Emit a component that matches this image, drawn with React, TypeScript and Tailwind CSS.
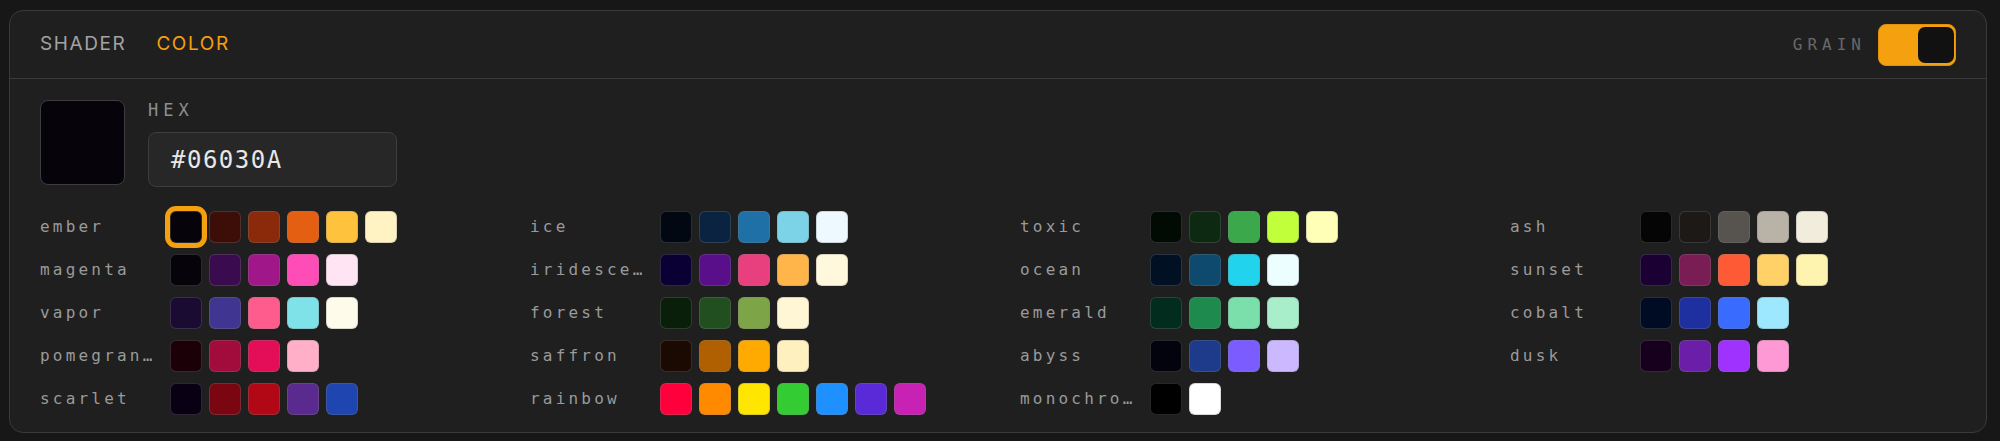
import { useState } from "react";

type Palette = {
  name: string;
  colors: string[];
};

const PALETTES: Palette[] = [
  { name: "ember", colors: ["#06030A", "#3D0E07", "#8B2A0B", "#E55F12", "#FFC23D", "#FFF3C4"] },
  { name: "magenta", colors: ["#06030A", "#3B0B4F", "#A0178A", "#FF4DB8", "#FFE5F3"] },
  { name: "vapor", colors: ["#1A0B33", "#413592", "#FF5C8E", "#7EE2E8", "#FFFBEA"] },
  { name: "pomegranate", colors: ["#1C0008", "#A20C3C", "#E40D58", "#FFB0C8"] },
  { name: "scarlet", colors: ["#0A0014", "#7A0611", "#B20714", "#5B2A8F", "#1F45B0"] },
  { name: "ice", colors: ["#020812", "#0A2340", "#2070A8", "#7CD2E6", "#EEF8FF"] },
  { name: "iridescent", colors: ["#0A0033", "#5A0F8A", "#E8407F", "#FFB54A", "#FFF8DC"] },
  { name: "forest", colors: ["#0A1F0A", "#214F20", "#7DA548", "#FFF6D5"] },
  { name: "saffron", colors: ["#1A0A02", "#B06000", "#FFAA00", "#FFF0C0"] },
  { name: "rainbow", colors: ["#FF003C", "#FF8A00", "#FFE600", "#33CC33", "#1E90FF", "#5B2AD8", "#C822B4"] },
  { name: "toxic", colors: ["#020A04", "#0D2912", "#3BA84B", "#C0FF3A", "#FFFFB8"] },
  { name: "ocean", colors: ["#021024", "#0D4A6E", "#22D3EE", "#ECFEFF"] },
  { name: "emerald", colors: ["#022C1E", "#1F8A4E", "#7ADFAA", "#A8EECB"] },
  { name: "abyss", colors: ["#03030D", "#1E3A8A", "#7B5CFF", "#CBB8FF"] },
  { name: "monochrome", colors: ["#000000", "#FFFFFF"] },
  { name: "ash", colors: ["#050505", "#1C1917", "#57534E", "#B8B2A7", "#F2ECDD"] },
  { name: "sunset", colors: ["#1A0033", "#7A1D55", "#FF5A36", "#FFD166", "#FFF3B0"] },
  { name: "cobalt", colors: ["#000B24", "#1E2FA0", "#3A6BFF", "#9DE8FF"] },
  { name: "dusk", colors: ["#16001E", "#6B1FA8", "#A032FF", "#FF99D6"] },
];

const MONO = "font-['DejaVu_Sans_Mono','Liberation_Mono',monospace]";

export default function App() {
  const [tab, setTab] = useState<"shader" | "color">("color");
  const [grain, setGrain] = useState(true);
  const [selected, setSelected] = useState({ palette: "ember", index: 0 });

  const hex = PALETTES.find((p) => p.name === selected.palette)?.colors[selected.index] ?? "#06030A";

  return (
    <div className="min-h-screen bg-[#171717] pl-[9px] pt-[10px]">
      <div className="flex h-[423px] w-[1978px] flex-col rounded-[14px] border border-[#3a3a3a] bg-[#1f1f1f]">
        <div className="flex h-[68px] items-center justify-between border-b border-[#3a3a3a] px-[30px]">
          <div className="flex items-center gap-[30px] font-['Inter',sans-serif] text-[19px] tracking-[1.6px]">
            <button
              type="button"
              onClick={() => setTab("shader")}
              className={tab === "shader" ? "text-[#f5a00f]" : "text-[#a3a3a3]"}
            >
              SHADER
            </button>
            <button
              type="button"
              onClick={() => setTab("color")}
              className={tab === "color" ? "text-[#f5a00f]" : "text-[#a3a3a3]"}
            >
              COLOR
            </button>
          </div>
          <div className="flex items-center gap-[12px]">
            <span className={`${MONO} text-[16px] tracking-[5px] text-[#686868]`}>GRAIN</span>
            <button
              type="button"
              onClick={() => setGrain((g) => !g)}
              className={`flex h-[42px] w-[78px] items-center rounded-[8px] border px-[1px] ${
                grain ? "justify-end border-[#e0900a] bg-[#f5a00f]" : "justify-start border-[#3a3a3a] bg-[#2a2a2a]"
              }`}
            >
              <span className="h-[36px] w-[36px] rounded-[7px] bg-[#111111]" />
            </button>
          </div>
        </div>

        <div className="flex flex-col px-[30px] pt-[21px]">
          <div className="flex gap-[23px]">
            <div
              className="h-[85px] w-[85px] rounded-[8px] border border-[#3d3d3d]"
              style={{ backgroundColor: hex }}
            />
            <div className="flex flex-col">
              <div className={`${MONO} h-[20px] text-[17px] leading-[20px] tracking-[5px] text-[#8e8e8e]`}>HEX</div>
              <div className="mt-[12px] flex h-[55px] w-[249px] items-center rounded-[8px] border border-[#3d3d3d] bg-[#272727] px-[22px]">
                <span className={`${MONO} text-[24px] tracking-[1.5px] text-[#e8e8e8]`}>{hex.toUpperCase()}</span>
              </div>
            </div>
          </div>

          <div className="mt-[24px] grid grid-flow-col grid-cols-[repeat(4,448px)] grid-rows-5 gap-x-[42px] gap-y-[11px]">
            {PALETTES.map((p) => (
              <div key={p.name} className="flex h-[32px] items-center gap-[12px]">
                <span className={`${MONO} w-[118px] truncate text-[16px] tracking-[3.2px] text-[#9a9a9a]`}>
                  {p.name}
                </span>
                <div className="flex gap-[7px]">
                  {p.colors.map((c, i) => {
                    const isSel = selected.palette === p.name && selected.index === i;
                    return (
                      <button
                        key={i}
                        type="button"
                        onClick={() => setSelected({ palette: p.name, index: i })}
                        className={`h-[32px] w-[32px] rounded-[6px] border border-[rgba(128,128,128,0.3)] ${
                          isSel ? "shadow-[0_0_0_5px_#f5a00f]" : ""
                        }`}
                        style={{ backgroundColor: c }}
                      />
                    );
                  })}
                </div>
              </div>
            ))}
          </div>
        </div>
      </div>
    </div>
  );
}
